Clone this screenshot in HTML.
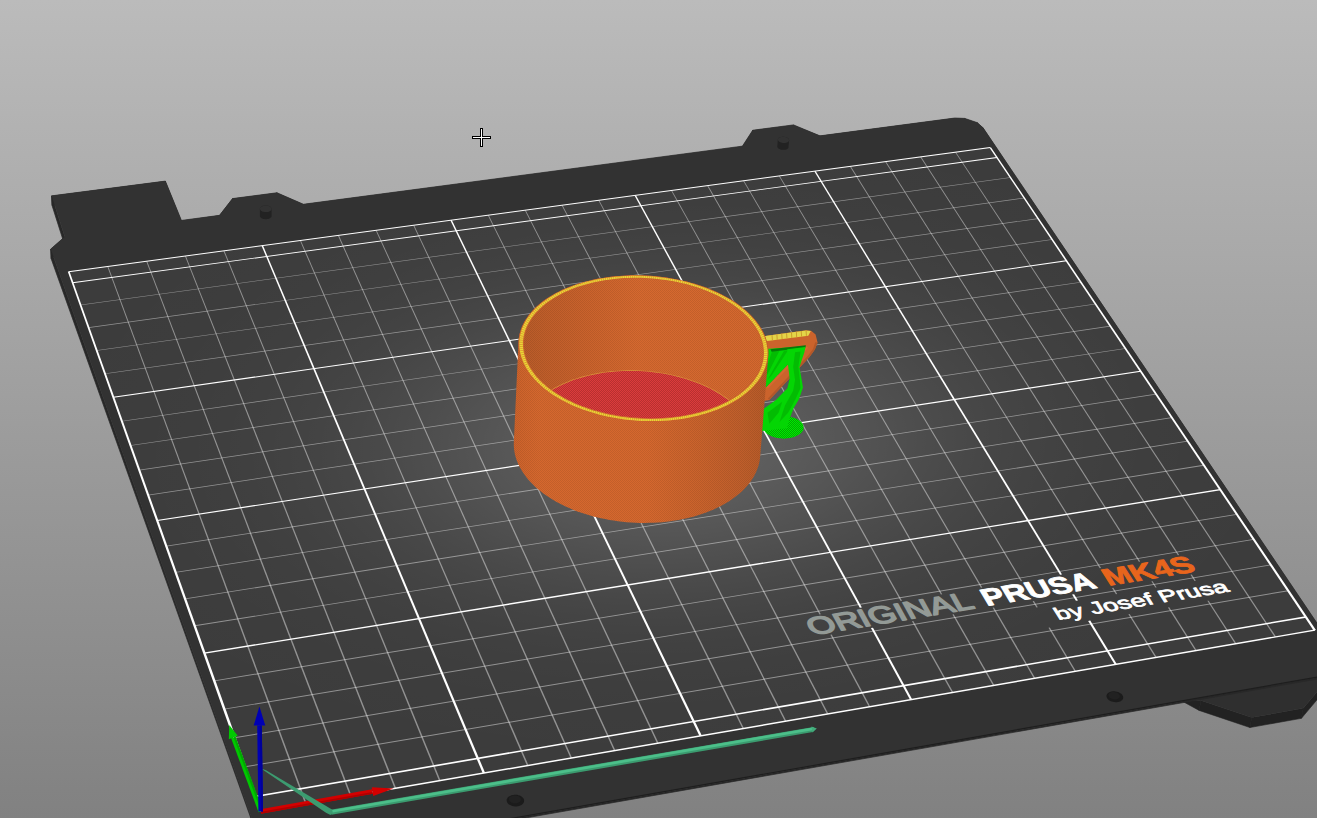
<!DOCTYPE html>
<html lang="en"><head><meta charset="utf-8"><title>PrusaSlicer preview</title>
<style>html,body{margin:0;padding:0;background:#818181;overflow:hidden}svg{display:block}text{font-family:"Liberation Sans",Arial,Helvetica,sans-serif}</style></head>
<body><svg width="1317" height="818" viewBox="0 0 1317 818">
<defs>
<linearGradient id="bg" x1="0" y1="0" x2="0" y2="1"><stop offset="0" stop-color="#bbbbbb"/><stop offset="1" stop-color="#818181"/></linearGradient>
<radialGradient id="hl" cx="0" cy="0" r="1" gradientUnits="userSpaceOnUse" gradientTransform="matrix(687.507 -104.375 -177.704 -343.964 668.23 443.41)"><stop offset="0.0000" stop-color="#fff" stop-opacity="0.1923"/><stop offset="0.0625" stop-color="#fff" stop-opacity="0.1877"/><stop offset="0.1250" stop-color="#fff" stop-opacity="0.1744"/><stop offset="0.1875" stop-color="#fff" stop-opacity="0.1544"/><stop offset="0.2500" stop-color="#fff" stop-opacity="0.1301"/><stop offset="0.3125" stop-color="#fff" stop-opacity="0.1045"/><stop offset="0.3750" stop-color="#fff" stop-opacity="0.0799"/><stop offset="0.4375" stop-color="#fff" stop-opacity="0.0581"/><stop offset="0.5000" stop-color="#fff" stop-opacity="0.0403"/><stop offset="0.5625" stop-color="#fff" stop-opacity="0.0266"/><stop offset="0.6250" stop-color="#fff" stop-opacity="0.0167"/><stop offset="0.6875" stop-color="#fff" stop-opacity="0.0100"/><stop offset="0.7500" stop-color="#fff" stop-opacity="0.0057"/><stop offset="0.8125" stop-color="#fff" stop-opacity="0.0031"/><stop offset="0.8750" stop-color="#fff" stop-opacity="0.0016"/><stop offset="0.9375" stop-color="#fff" stop-opacity="0.0008"/><stop offset="1.0000" stop-color="#fff" stop-opacity="0.0000"/></radialGradient>
</defs>
<rect width="1317" height="818" fill="url(#bg)"/>
<polygon points="1180.59,700.28 1200.89,700.42 1199.19,710.44 1180.59,700.28" fill="#222222" stroke="#222222" stroke-width="0.6"/>
<polygon points="1200.89,700.42 1251.71,717.48 1249.91,727.51 1199.19,710.44" fill="#222222" stroke="#222222" stroke-width="0.6"/>
<polygon points="1251.71,717.48 1303.3,708.33 1301.42,718.34 1249.91,727.51" fill="#222222" stroke="#222222" stroke-width="0.6"/>
<polygon points="1303.3,708.33 1332.49,673.66 1330.58,683.63 1301.42,718.34" fill="#222222" stroke="#222222" stroke-width="0.6"/>
<polygon points="1180.59,700.28 1200.89,700.42 1251.71,717.48 1303.3,708.33 1332.49,673.66" fill="#2f2f2f" />
<polygon points="266.94,861.78 50.78,249 51.15,258.68 266.94,863.34" fill="#282828" stroke="#282828" stroke-width="0.7"/>
<polygon points="50.78,249 64.75,236.76 65.09,246.41 51.15,258.68" fill="#282828" stroke="#282828" stroke-width="0.7"/>
<polygon points="64.75,236.76 51.69,195.84 52.04,205.44 65.09,246.41" fill="#282828" stroke="#282828" stroke-width="0.7"/>
<polygon points="51.69,195.84 165.39,181.1 165.56,190.65 52.04,205.44" fill="#282828" stroke="#282828" stroke-width="0.7"/>
<polygon points="165.39,181.1 181.42,220.41 181.57,230.02 165.56,190.65" fill="#282828" stroke="#282828" stroke-width="0.7"/>
<polygon points="181.42,220.41 219.51,215.37 219.6,224.96 181.57,230.02" fill="#282828" stroke="#282828" stroke-width="0.7"/>
<polygon points="219.51,215.37 232.54,198.59 232.61,208.15 219.6,224.96" fill="#282828" stroke="#282828" stroke-width="0.7"/>
<polygon points="232.54,198.59 276.95,192.75 276.94,202.3 232.61,208.15" fill="#282828" stroke="#282828" stroke-width="0.7"/>
<polygon points="276.95,192.75 303.4,204.26 303.36,213.82 276.94,202.3" fill="#282828" stroke="#282828" stroke-width="0.7"/>
<polygon points="303.4,204.26 742.41,146.14 741.68,155.51 303.36,213.82" fill="#282828" stroke="#282828" stroke-width="0.7"/>
<polygon points="742.41,146.14 752.76,130.23 752.02,139.57 741.68,155.51" fill="#282828" stroke="#282828" stroke-width="0.7"/>
<polygon points="752.76,130.23 793.49,124.88 792.69,134.2 752.02,139.57" fill="#282828" stroke="#282828" stroke-width="0.7"/>
<polygon points="793.49,124.88 819.95,135.87 819.11,145.21 792.69,134.2" fill="#282828" stroke="#282828" stroke-width="0.7"/>
<polygon points="819.95,135.87 954.75,118.02 953.71,127.3 819.11,145.21" fill="#282828" stroke="#282828" stroke-width="0.7"/>
<polygon points="954.75,118.02 964.74,118.4 963.68,127.67 953.71,127.3" fill="#282828" stroke="#282828" stroke-width="0.7"/>
<polygon points="964.74,118.4 977.35,122.67 976.27,131.95 963.68,127.67" fill="#282828" stroke="#282828" stroke-width="0.7"/>
<polygon points="977.35,122.67 983.1,127.87 982.02,137.16 976.27,131.95" fill="#282828" stroke="#282828" stroke-width="0.7"/>
<polygon points="983.1,127.87 1349.88,671.91 1349.59,673.41 982.02,137.16" fill="#282828" stroke="#282828" stroke-width="0.7"/>
<polygon points="1349.88,671.91 266.94,861.78 266.94,863.34 1349.59,673.41" fill="#282828" stroke="#282828" stroke-width="0.7"/>
<polygon points="266.94,861.78 50.78,249 64.75,236.76 51.69,195.84 165.39,181.1 181.42,220.41 219.51,215.37 232.54,198.59 276.95,192.75 303.4,204.26 742.41,146.14 752.76,130.23 793.49,124.88 819.95,135.87 954.75,118.02 964.74,118.4 977.35,122.67 983.1,127.87 1349.88,671.91" fill="#323232" />
<line x1="266.77" y1="861.32" x2="1349.61" y2="671.5" stroke="#1e1e1e" stroke-width="1.2"/>
<polygon points="260.71,811.43 1314.75,630.19 990.32,147.54 68.67,271.74" fill="#3c3c3c" />
<clipPath id="areaclip"><polygon points="260.71,811.43 1314.75,630.19 990.32,147.54 68.67,271.74"/></clipPath>
<rect width="1317" height="818" fill="url(#hl)" clip-path="url(#areaclip)"/>
<g font-family="'Liberation Sans', Arial, Helvetica, sans-serif">
<text transform="matrix(0.40558 -0.06724 0.14741 0.26582 889.53 613.49)" x="-201.5" y="30.45" font-size="87" font-weight="400" fill="#939a96" stroke="#939a96" stroke-width="5.5" stroke-linejoin="round" textLength="403" lengthAdjust="spacingAndGlyphs">ORIGINAL</text>
<text transform="matrix(0.39736 -0.06588 0.15700 0.26128 1037.86 588.89)" x="-140" y="30.45" font-size="87" font-weight="700" fill="#ffffff" stroke="#ffffff" stroke-width="3" stroke-linejoin="round" textLength="280" lengthAdjust="spacingAndGlyphs">PRUSA</text>
<text transform="matrix(0.39132 -0.06488 0.16398 0.25793 1148.08 570.62)" x="-113.5" y="30.45" font-size="87" font-weight="700" fill="#e8651c" stroke="#e8651c" stroke-width="3" stroke-linejoin="round" textLength="227" lengthAdjust="spacingAndGlyphs">MK4S</text>
<text transform="matrix(0.39502 -0.06627 0.16492 0.26244 1141.01 600.01)" x="-217.5" y="21.35" font-size="61" font-weight="400" fill="#ffffff" stroke="#ffffff" stroke-width="2.6" stroke-linejoin="round" textLength="435" lengthAdjust="spacingAndGlyphs">by Josef Prusa</text>
</g>
<g id="grid">
<polygon points="305.1,803.79 107.29,266.53 108.27,266.4 306.67,803.52" fill="#fff" fill-opacity="0.44"/>
<polygon points="350,796.07 146.21,261.29 147.19,261.16 351.56,795.8" fill="#fff" fill-opacity="0.44"/>
<polygon points="394.64,788.4 184.93,256.07 185.9,255.94 396.19,788.13" fill="#fff" fill-opacity="0.44"/>
<polygon points="439.02,780.77 223.45,250.88 224.42,250.75 440.55,780.5" fill="#fff" fill-opacity="0.44"/>
<polygon points="526.99,765.64 299.92,240.58 300.88,240.45 528.51,765.38" fill="#fff" fill-opacity="0.44"/>
<polygon points="570.59,758.14 337.87,235.46 338.83,235.33 572.1,757.88" fill="#fff" fill-opacity="0.44"/>
<polygon points="613.94,750.69 375.63,230.37 376.58,230.24 615.44,750.43" fill="#fff" fill-opacity="0.44"/>
<polygon points="657.03,743.28 413.2,225.31 414.15,225.18 658.53,743.02" fill="#fff" fill-opacity="0.44"/>
<polygon points="742.48,728.59 487.79,215.26 488.73,215.13 743.96,728.33" fill="#fff" fill-opacity="0.44"/>
<polygon points="784.83,721.3 524.8,210.27 525.74,210.14 786.3,721.05" fill="#fff" fill-opacity="0.44"/>
<polygon points="826.95,714.06 561.63,205.31 562.57,205.18 828.4,713.81" fill="#fff" fill-opacity="0.44"/>
<polygon points="868.82,706.86 830.35,634.83 831.72,634.6 870.27,706.61" fill="#fff" fill-opacity="0.44"/>
<polygon points="819.47,614.47 598.29,200.37 599.21,200.24 820.82,614.25" fill="#fff" fill-opacity="0.44"/>
<polygon points="951.84,692.59 911.94,621.24 913.3,621.01 953.28,692.34" fill="#fff" fill-opacity="0.44"/>
<polygon points="900.66,601.07 671.05,190.56 671.97,190.44 901.99,600.85" fill="#fff" fill-opacity="0.44"/>
<polygon points="993,685.51 952.4,614.5 953.75,614.28 994.43,685.26" fill="#fff" fill-opacity="0.44"/>
<polygon points="940.92,594.43 707.17,185.7 708.09,185.57 942.24,594.21" fill="#fff" fill-opacity="0.44"/>
<polygon points="1033.93,678.47 992.63,607.8 993.97,607.58 1035.35,678.23" fill="#fff" fill-opacity="0.44"/>
<polygon points="980.96,587.82 743.11,180.85 744.02,180.73 982.27,587.6" fill="#fff" fill-opacity="0.44"/>
<polygon points="1074.63,671.48 1048.47,627.65 1049.84,627.42 1076.04,671.23" fill="#fff" fill-opacity="0.44"/>
<polygon points="1020.77,581.25 778.87,176.03 779.79,175.91 1022.08,581.03" fill="#fff" fill-opacity="0.44"/>
<polygon points="1036.42,607.46 1032.64,601.14 1033.98,600.91 1037.76,607.24" fill="#fff" fill-opacity="0.44"/>
<polygon points="1155.33,657.6 1128.34,614.19 1129.69,613.96 1156.74,657.36" fill="#fff" fill-opacity="0.44"/>
<polygon points="1099.75,568.21 849.88,166.46 850.79,166.34 1101.05,567.99" fill="#fff" fill-opacity="0.44"/>
<polygon points="1115.9,594.19 1112,587.92 1113.33,587.7 1117.23,593.96" fill="#fff" fill-opacity="0.44"/>
<polygon points="1195.35,650.72 1167.94,607.51 1169.29,607.28 1196.74,650.48" fill="#fff" fill-opacity="0.44"/>
<polygon points="1138.91,561.74 885.13,161.71 886.04,161.59 1140.21,561.53" fill="#fff" fill-opacity="0.44"/>
<polygon points="1155.31,587.6 1151.36,581.36 1152.67,581.14 1156.64,587.38" fill="#fff" fill-opacity="0.44"/>
<polygon points="1235.14,643.88 1207.33,600.87 1208.67,600.64 1236.53,643.64" fill="#fff" fill-opacity="0.44"/>
<polygon points="1177.87,555.32 920.21,156.99 921.12,156.86 1179.16,555.1" fill="#fff" fill-opacity="0.44"/>
<polygon points="1194.51,581.05 1190.49,574.84 1191.81,574.62 1195.83,580.83" fill="#fff" fill-opacity="0.44"/>
<polygon points="1274.71,637.07 955.13,152.28 956.02,152.16 1276.09,636.83" fill="#fff" fill-opacity="0.44"/>
<polygon points="244.68,766.37 1287.92,590.26 1288.51,591.15 245.04,767.37" fill="#fff" fill-opacity="0.44"/>
<polygon points="234.33,737.27 1270.56,564.44 1271.14,565.31 234.67,738.24" fill="#fff" fill-opacity="0.44"/>
<polygon points="224.13,708.63 1253.46,539 1254.02,539.84 224.47,709.56" fill="#fff" fill-opacity="0.44"/>
<polygon points="214.1,680.43 1236.6,513.93 1237.15,514.74 214.42,681.34" fill="#fff" fill-opacity="0.44"/>
<polygon points="194.5,625.34 1203.62,464.87 1204.14,465.63 194.8,626.19" fill="#fff" fill-opacity="0.44"/>
<polygon points="184.92,598.42 1187.49,440.86 1187.99,441.6 185.21,599.25" fill="#fff" fill-opacity="0.44"/>
<polygon points="175.49,571.92 1171.58,417.19 1172.06,417.91 175.77,572.72" fill="#fff" fill-opacity="0.44"/>
<polygon points="166.19,545.8 1155.89,393.85 1156.36,394.56 166.47,546.58" fill="#fff" fill-opacity="0.44"/>
<polygon points="148.02,494.74 1125.17,348.15 1125.62,348.82 148.28,495.47" fill="#fff" fill-opacity="0.44"/>
<polygon points="139.14,469.77 1110.13,325.77 1110.56,326.42 139.39,470.48" fill="#fff" fill-opacity="0.44"/>
<polygon points="130.38,445.17 1095.29,303.7 1095.71,304.33 130.63,445.85" fill="#fff" fill-opacity="0.44"/>
<polygon points="121.75,420.92 1080.65,281.92 1081.06,282.53 121.99,421.58" fill="#fff" fill-opacity="0.44"/>
<polygon points="104.86,373.45 1051.96,239.25 1052.35,239.83 105.09,374.08" fill="#fff" fill-opacity="0.44"/>
<polygon points="96.6,350.23 1037.91,218.33 1038.29,218.9 96.82,350.84" fill="#fff" fill-opacity="0.44"/>
<polygon points="88.45,327.33 1024.04,197.7 1024.4,198.25 88.66,327.92" fill="#fff" fill-opacity="0.44"/>
<polygon points="80.41,304.75 1010.35,177.33 1010.7,177.87 80.62,305.33" fill="#fff" fill-opacity="0.44"/>
<polygon points="482.72,773.25 261.52,245.75 263.01,245.55 485.08,772.85" fill="#fff" />
<polygon points="699.48,735.98 450.33,220.31 451.79,220.11 701.77,735.59" fill="#fff" />
<polygon points="910.06,699.77 870.89,628.08 872.99,627.73 912.28,699.39" fill="#fff" />
<polygon points="859.82,607.81 634.51,195.49 635.93,195.29 861.88,607.47" fill="#fff" />
<polygon points="1114.71,664.58 1088.15,620.96 1090.24,620.61 1116.88,664.21" fill="#fff" />
<polygon points="1060.01,574.77 814.22,171.27 815.62,171.08 1062.03,574.44" fill="#fff" />
<polygon points="1075.91,600.87 1072.07,594.57 1074.12,594.23 1077.97,600.52" fill="#fff" />
<polygon points="255.1,795.66 1305.36,616.22 1306.32,617.64 255.67,797.25" fill="#fff" />
<polygon points="204.14,652.44 1219.85,489.01 1220.67,490.23 204.62,653.79" fill="#fff" />
<polygon points="156.97,519.88 1140.3,370.66 1141.01,371.71 157.38,521.04" fill="#fff" />
<polygon points="113.18,396.84 1066.1,260.28 1066.72,261.2 113.54,397.84" fill="#fff" />
<polygon points="72.44,282.33 996.74,157.09 997.28,157.9 72.74,283.19" fill="#fff" />
<polygon points="260.46,810.71 1314.32,629.55 1315.18,630.83 260.97,812.14" fill="#fff" />
<polygon points="68.5,271.26 990.02,147.1 990.61,147.98 68.84,272.21" fill="#fff" />
<polygon points="259.36,811.66 67.82,271.85 69.52,271.62 262.07,811.19" fill="#fff" />
<polygon points="1313.58,630.39 989.55,147.64 991.09,147.43 1315.93,629.98" fill="#fff" />
</g>
<polygon points="259.94,209.12 259.94,208.61 260.09,208.1 260.38,207.62 260.79,207.16 261.33,206.75 261.99,206.4 262.73,206.1 263.55,205.87 264.42,205.71 265.32,205.63 266.24,205.63 267.14,205.71 268.01,205.87 268.83,206.1 269.57,206.4 270.21,206.76 270.75,207.18 271.16,207.63 271.45,208.12 271.59,208.62 271.59,215.66 271.59,216.18 271.44,216.68 271.16,217.17 270.74,217.62 270.2,218.03 269.55,218.4 268.81,218.69 267.99,218.93 267.12,219.08 266.21,219.16 265.3,219.16 264.39,219.08 263.52,218.92 262.71,218.69 261.97,218.39 261.32,218.03 260.79,217.61 260.37,217.16 260.09,216.67 259.95,216.16" fill="#222222" />
<polygon points="271.45,208.12 271.16,207.63 270.75,207.18 270.21,206.76 269.57,206.4 268.83,206.1 268.01,205.87 267.14,205.71 266.24,205.63 265.32,205.63 264.42,205.71 263.55,205.87 262.73,206.1 261.99,206.39 261.33,206.75 260.79,207.17 260.37,207.62 260.09,208.1 259.94,208.61 259.94,209.12 260.08,209.62 260.36,210.11 260.77,210.56 261.31,210.98 261.95,211.34 262.69,211.64 263.51,211.87 264.38,212.03 265.29,212.11 266.21,212.11 267.11,212.03 267.99,211.88 268.8,211.65 269.55,211.35 270.2,210.99 270.74,210.57 271.16,210.12 271.44,209.63 271.59,209.13 271.59,208.62" fill="#323232" />
<polygon points="777.29,146.54 777.87,139.65 777.92,139.18 778.12,138.72 778.44,138.29 778.89,137.91 779.45,137.57 780.11,137.29 780.85,137.07 781.66,136.93 782.51,136.85 783.38,136.86 784.26,136.93 785.12,137.08 785.93,137.3 786.69,137.59 787.37,137.93 787.95,138.32 788.42,138.75 788.77,139.21 788.99,139.68 789.07,140.16 788.48,147.05 788.43,147.52 788.24,147.98 787.91,148.41 787.47,148.8 786.9,149.14 786.25,149.42 785.5,149.64 784.7,149.79 783.84,149.86 782.97,149.86 782.09,149.78 781.23,149.63 780.42,149.41 779.66,149.12 778.98,148.78 778.4,148.39 777.93,147.96 777.59,147.5 777.37,147.02" fill="#222222" />
<polygon points="788.77,139.21 788.42,138.75 787.95,138.32 787.37,137.93 786.69,137.59 785.94,137.3 785.12,137.08 784.26,136.93 783.39,136.86 782.51,136.85 781.66,136.93 780.85,137.07 780.11,137.29 779.45,137.57 778.89,137.91 778.44,138.29 778.12,138.72 777.92,139.18 777.86,139.65 777.95,140.14 778.16,140.61 778.51,141.07 778.98,141.5 779.56,141.89 780.24,142.23 780.99,142.52 781.81,142.74 782.67,142.89 783.55,142.97 784.43,142.97 785.28,142.9 786.09,142.75 786.83,142.53 787.49,142.25 788.05,141.91 788.5,141.53 788.82,141.1 789.01,140.64 789.07,140.16 788.99,139.68" fill="#323232" />
<polygon points="523.8,799.1 523.32,798.23 522.64,797.42 521.79,796.69 520.78,796.06 519.64,795.53 518.39,795.13 517.07,794.87 515.71,794.74 514.34,794.76 513,794.91 511.72,795.21 510.53,795.64 509.45,796.19 508.53,796.85 507.77,797.6 507.2,798.42 506.83,799.3 506.67,800.2 506.73,801.12 507,802.02 507.48,802.89 508.15,803.7 509.01,804.43 510.02,805.07 511.16,805.6 512.41,806 513.73,806.27 515.1,806.39 516.47,806.38 517.81,806.22 519.1,805.92 520.29,805.49 521.37,804.93 522.29,804.27 523.05,803.52 523.62,802.7 523.98,801.82 524.13,800.91 524.07,800" fill="#1b1b1b" />
<polygon points="520.64,798.37 520.31,797.78 519.85,797.22 519.27,796.73 518.57,796.29 517.79,795.93 516.94,795.66 516.04,795.48 515.11,795.39 514.17,795.4 513.25,795.51 512.38,795.71 511.56,796 510.83,796.38 510.19,796.83 509.68,797.34 509.29,797.91 509.03,798.5 508.93,799.13 508.97,799.75 509.15,800.37 509.48,800.96 509.94,801.52 510.52,802.02 511.21,802.45 512,802.81 512.85,803.09 513.75,803.27 514.69,803.36 515.62,803.35 516.54,803.24 517.42,803.03 518.24,802.74 518.97,802.36 519.61,801.91 520.13,801.39 520.51,800.83 520.76,800.23 520.87,799.61 520.83,798.99" fill="#212121" />
<polygon points="1122.58,695.43 1121.99,694.62 1121.22,693.87 1120.29,693.19 1119.23,692.59 1118.06,692.1 1116.82,691.73 1115.52,691.48 1114.21,691.35 1112.92,691.37 1111.67,691.51 1110.5,691.79 1109.43,692.18 1108.5,692.7 1107.73,693.31 1107.13,694 1106.72,694.77 1106.51,695.59 1106.5,696.43 1106.7,697.29 1107.11,698.13 1107.7,698.94 1108.47,699.69 1109.39,700.38 1110.46,700.97 1111.63,701.47 1112.88,701.85 1114.17,702.1 1115.49,702.22 1116.79,702.21 1118.04,702.06 1119.21,701.78 1120.28,701.38 1121.21,700.87 1121.98,700.26 1122.58,699.56 1122.99,698.79 1123.19,697.97 1123.19,697.13 1122.99,696.27" fill="#1b1b1b" />
<polygon points="1119.47,694.75 1119.06,694.19 1118.54,693.68 1117.9,693.21 1117.18,692.81 1116.38,692.47 1115.53,692.21 1114.64,692.04 1113.74,691.96 1112.86,691.97 1112,692.07 1111.2,692.25 1110.47,692.53 1109.84,692.88 1109.31,693.29 1108.9,693.77 1108.62,694.29 1108.47,694.85 1108.47,695.43 1108.61,696.01 1108.88,696.59 1109.29,697.14 1109.81,697.66 1110.45,698.13 1111.17,698.54 1111.97,698.87 1112.83,699.13 1113.72,699.3 1114.62,699.39 1115.5,699.38 1116.36,699.28 1117.16,699.09 1117.89,698.82 1118.53,698.47 1119.06,698.05 1119.47,697.57 1119.74,697.04 1119.89,696.48 1119.89,695.91 1119.75,695.32" fill="#212121" />
<defs><linearGradient id="cupg" x1="514" y1="0" x2="769" y2="0" gradientUnits="userSpaceOnUse">
<stop offset="0" stop-color="#cd632b"/><stop offset="0.1" stop-color="#d6682e"/><stop offset="0.52" stop-color="#d6682e"/><stop offset="0.73" stop-color="#ca632c"/><stop offset="0.89" stop-color="#c05f2b"/><stop offset="1" stop-color="#b75a28"/></linearGradient>
<linearGradient id="cupin" x1="520" y1="0" x2="765" y2="0" gradientUnits="userSpaceOnUse">
<stop offset="0" stop-color="#b85b29"/><stop offset="0.1" stop-color="#c05e2a"/><stop offset="0.28" stop-color="#cb632c"/><stop offset="0.48" stop-color="#d6692f"/><stop offset="1" stop-color="#d5682e"/></linearGradient>
<pattern id="dith" width="2" height="2" patternUnits="userSpaceOnUse"><rect width="1" height="1" fill="#000" fill-opacity="0.09"/><rect x="1" y="1" width="1" height="1" fill="#000" fill-opacity="0.09"/></pattern><pattern id="chk" width="2" height="2" patternUnits="userSpaceOnUse"><rect width="2" height="2" fill="#b83030"/><rect width="1" height="1" fill="#dc3c3c"/><rect x="1" y="1" width="1" height="1" fill="#dc3c3c"/></pattern></defs>
<defs><pattern id="gchk" width="2" height="2" patternUnits="userSpaceOnUse"><rect width="2" height="2" fill="#00a800"/><rect width="1" height="1" fill="#00ea00"/><rect x="1" y="1" width="1" height="1" fill="#00ea00"/></pattern></defs>
<ellipse cx="783.67" cy="427.43" rx="20" ry="11.2" fill="url(#gchk)"/>
<polygon points="762.02,347.61 806.42,345.23 765.69,387.98 762.02,388.9" fill="#04d604" />
<polygon points="772.11,351.28 779.45,350.73 767.52,374.22 764.77,373.3" fill="#03bc03" />
<polygon points="784.04,350.73 788.07,350.37 771.19,376.06 767.52,379.72" fill="#03bc03" />
<polygon points="762.02,338.99 766.73,335.63 805.83,330.26 811.19,330.73 815.6,334.59 817.56,342.48 814.86,349.45 809.72,356.79 769.36,399.91 762.02,401.19 762.02,387.25 766.7,386.97 805.87,346.33 768.62,348.83 762.02,349.27" fill="#cb632c" />
<polygon points="805.87,346.33 766.7,386.97 767.89,388.53 808.26,347.8" fill="#d46a30" />
<polygon points="817.56,342.48 814.86,349.45 809.72,356.79 769.36,399.91 767.89,398.44 808.26,355.14 813.03,348.9 815.23,342.29" fill="#b35829" />
<polygon points="762.39,336.79 766.73,335.87 805.83,330.46 810.83,330.92 808.26,335.87 767.23,341.01 762.39,341.56" fill="#e4d548" />
<polygon points="771.56,335.14 772.48,335.03 772.84,340.46 771.93,340.57" fill="#c99a2a" />
<polygon points="776.42,334.47 777.34,334.36 777.71,339.79 776.79,339.9" fill="#c99a2a" />
<polygon points="781.28,333.8 782.2,333.69 782.57,339.12 781.65,339.23" fill="#c99a2a" />
<polygon points="786.15,333.13 787.06,333.02 787.43,338.45 786.51,338.56" fill="#c99a2a" />
<polygon points="791.01,332.46 791.93,332.35 792.29,337.78 791.38,337.89" fill="#c99a2a" />
<polygon points="795.87,331.79 796.79,331.68 797.16,337.11 796.24,337.22" fill="#c99a2a" />
<polygon points="800.73,331.12 801.65,331.01 802.02,336.44 801.1,336.55" fill="#c99a2a" />
<polygon points="805.6,330.45 806.51,330.34 806.88,335.77 805.96,335.88" fill="#c99a2a" />
<polygon points="770.46,349.27 805.87,345.32 805.5,347.43 771.56,351.65" fill="#067a08" />
<polygon points="787.34,349.27 805.5,346.88 804.4,352.2 799.45,366.88 801.47,378.62 802.94,387.43 799.08,398.99 793.58,408.17 789.17,420.09 786.79,428.35 762.02,431.1 762.02,410 775.96,399.91 787.34,388.35 789.72,378.62 788.26,366.88 787.34,359.17" fill="#04d604" />
<polygon points="795.05,352.2 800.55,351.47 798.35,366.88 799.82,379.72 800.55,387.98 795.05,399.91 788.07,412.75 779.45,421.93 784.95,405.41 793.21,390.73 795.05,379.72 793.21,366.88" fill="#03bc03" />
<polygon points="767.52,412.75 782.2,401.74 778.53,412.75 769.36,423.76" fill="#03bc03" />
<polygon points="513.8,444.04 513.88,441.45 518.53,341.26 518.76,338.73 519.14,336.21 519.67,333.7 520.35,331.21 521.18,328.75 522.15,326.31 523.27,323.91 524.54,321.53 525.94,319.19 527.49,316.88 529.18,314.62 531,312.39 532.95,310.21 535.03,308.08 537.25,306 539.58,303.97 542.04,302 544.62,300.08 547.31,298.22 550.12,296.42 553.03,294.68 556.05,293.01 559.17,291.41 562.38,289.87 565.7,288.4 569.1,287 572.58,285.68 576.15,284.43 579.8,283.26 583.51,282.17 587.3,281.15 591.15,280.21 595.06,279.35 599.03,278.57 603.04,277.88 607.1,277.26 611.21,276.73 615.35,276.29 619.52,275.92 623.71,275.65 627.93,275.45 632.17,275.35 636.42,275.32 640.68,275.39 644.94,275.53 649.2,275.77 653.45,276.08 657.69,276.48 661.92,276.97 666.12,277.54 670.3,278.19 674.45,278.92 678.56,279.73 682.63,280.63 686.65,281.6 690.63,282.65 694.55,283.78 698.42,284.98 702.22,286.26 705.95,287.61 709.61,289.03 713.2,290.53 716.71,292.09 720.13,293.72 723.46,295.41 726.7,297.17 729.85,298.99 732.89,300.86 735.83,302.8 738.66,304.79 741.38,306.83 743.99,308.92 746.48,311.06 748.85,313.25 751.1,315.48 753.22,317.75 755.21,320.05 757.07,322.4 758.79,324.77 760.38,327.18 761.83,329.61 763.14,332.07 764.31,334.55 765.33,337.05 766.2,339.56 766.93,342.09 767.51,344.63 767.94,347.17 768.22,349.72 768.35,352.26 768.32,354.81 768.14,357.35 760.12,457.3 759.79,459.87 759.31,462.44 758.67,464.99 757.89,467.52 756.97,470.03 755.89,472.51 754.66,474.97 753.29,477.4 751.78,479.79 750.12,482.15 748.32,484.46 746.38,486.74 744.3,488.97 742.09,491.14 739.75,493.27 737.27,495.34 734.67,497.36 731.95,499.31 729.1,501.21 726.14,503.04 723.06,504.8 719.88,506.49 716.58,508.11 713.19,509.65 709.7,511.12 706.11,512.51 702.44,513.82 698.68,515.05 694.84,516.19 690.93,517.25 686.94,518.22 682.89,519.1 678.79,519.9 674.62,520.6 670.41,521.21 666.16,521.73 661.87,522.16 657.54,522.49 653.19,522.73 648.82,522.87 644.43,522.92 640.03,522.88 635.63,522.74 631.23,522.5 626.83,522.17 622.45,521.75 618.09,521.23 613.76,520.62 609.45,519.92 605.18,519.12 600.95,518.24 596.77,517.27 592.64,516.21 588.56,515.07 584.55,513.84 580.61,512.52 576.74,511.13 572.95,509.66 569.25,508.11 565.62,506.49 562.1,504.79 558.66,503.02 555.33,501.19 552.11,499.29 548.99,497.32 545.98,495.3 543.09,493.22 540.33,491.08 537.68,488.89 535.16,486.65 532.77,484.37 530.51,482.04 528.39,479.67 526.4,477.27 524.56,474.83 522.85,472.36 521.29,469.86 519.87,467.33 518.6,464.79 517.47,462.22 516.5,459.64 515.67,457.06 515,454.46 514.47,451.85 514.1,449.25 513.87,446.64" fill="url(#cupg)" />
<polygon points="513.8,444.04 513.88,441.45 518.53,341.26 518.76,338.73 519.14,336.21 519.67,333.7 520.35,331.21 521.18,328.75 522.15,326.31 523.27,323.91 524.54,321.53 525.94,319.19 527.49,316.88 529.18,314.62 531,312.39 532.95,310.21 535.03,308.08 537.25,306 539.58,303.97 542.04,302 544.62,300.08 547.31,298.22 550.12,296.42 553.03,294.68 556.05,293.01 559.17,291.41 562.38,289.87 565.7,288.4 569.1,287 572.58,285.68 576.15,284.43 579.8,283.26 583.51,282.17 587.3,281.15 591.15,280.21 595.06,279.35 599.03,278.57 603.04,277.88 607.1,277.26 611.21,276.73 615.35,276.29 619.52,275.92 623.71,275.65 627.93,275.45 632.17,275.35 636.42,275.32 640.68,275.39 644.94,275.53 649.2,275.77 653.45,276.08 657.69,276.48 661.92,276.97 666.12,277.54 670.3,278.19 674.45,278.92 678.56,279.73 682.63,280.63 686.65,281.6 690.63,282.65 694.55,283.78 698.42,284.98 702.22,286.26 705.95,287.61 709.61,289.03 713.2,290.53 716.71,292.09 720.13,293.72 723.46,295.41 726.7,297.17 729.85,298.99 732.89,300.86 735.83,302.8 738.66,304.79 741.38,306.83 743.99,308.92 746.48,311.06 748.85,313.25 751.1,315.48 753.22,317.75 755.21,320.05 757.07,322.4 758.79,324.77 760.38,327.18 761.83,329.61 763.14,332.07 764.31,334.55 765.33,337.05 766.2,339.56 766.93,342.09 767.51,344.63 767.94,347.17 768.22,349.72 768.35,352.26 768.32,354.81 768.14,357.35 760.12,457.3 759.79,459.87 759.31,462.44 758.67,464.99 757.89,467.52 756.97,470.03 755.89,472.51 754.66,474.97 753.29,477.4 751.78,479.79 750.12,482.15 748.32,484.46 746.38,486.74 744.3,488.97 742.09,491.14 739.75,493.27 737.27,495.34 734.67,497.36 731.95,499.31 729.1,501.21 726.14,503.04 723.06,504.8 719.88,506.49 716.58,508.11 713.19,509.65 709.7,511.12 706.11,512.51 702.44,513.82 698.68,515.05 694.84,516.19 690.93,517.25 686.94,518.22 682.89,519.1 678.79,519.9 674.62,520.6 670.41,521.21 666.16,521.73 661.87,522.16 657.54,522.49 653.19,522.73 648.82,522.87 644.43,522.92 640.03,522.88 635.63,522.74 631.23,522.5 626.83,522.17 622.45,521.75 618.09,521.23 613.76,520.62 609.45,519.92 605.18,519.12 600.95,518.24 596.77,517.27 592.64,516.21 588.56,515.07 584.55,513.84 580.61,512.52 576.74,511.13 572.95,509.66 569.25,508.11 565.62,506.49 562.1,504.79 558.66,503.02 555.33,501.19 552.11,499.29 548.99,497.32 545.98,495.3 543.09,493.22 540.33,491.08 537.68,488.89 535.16,486.65 532.77,484.37 530.51,482.04 528.39,479.67 526.4,477.27 524.56,474.83 522.85,472.36 521.29,469.86 519.87,467.33 518.6,464.79 517.47,462.22 516.5,459.64 515.67,457.06 515,454.46 514.47,451.85 514.1,449.25 513.87,446.64" fill="url(#dith)" />
<polygon points="761.83,329.61 760.38,327.18 758.8,324.77 757.07,322.4 755.21,320.05 753.22,317.75 751.1,315.48 748.85,313.25 746.48,311.06 743.99,308.92 741.38,306.83 738.66,304.79 735.83,302.8 732.89,300.86 729.84,298.99 726.7,297.17 723.46,295.41 720.13,293.72 716.71,292.09 713.2,290.53 709.61,289.03 705.95,287.61 702.22,286.26 698.42,284.98 694.55,283.78 690.63,282.65 686.65,281.6 682.63,280.63 678.56,279.73 674.45,278.92 670.3,278.19 666.12,277.54 661.92,276.97 657.69,276.48 653.45,276.08 649.2,275.77 644.94,275.53 640.68,275.39 636.42,275.32 632.17,275.35 627.93,275.45 623.71,275.65 619.52,275.92 615.35,276.29 611.21,276.73 607.1,277.26 603.04,277.88 599.03,278.57 595.06,279.35 591.15,280.21 587.3,281.15 583.51,282.16 579.8,283.26 576.15,284.43 572.58,285.68 569.1,287.01 565.7,288.4 562.39,289.87 559.17,291.41 556.05,293.01 553.03,294.68 550.12,296.42 547.31,298.22 544.62,300.08 542.04,302 539.58,303.97 537.25,306 535.03,308.08 532.95,310.22 531,312.39 529.18,314.62 527.49,316.88 525.94,319.19 524.54,321.53 523.27,323.91 522.15,326.32 521.18,328.75 520.35,331.21 519.67,333.7 519.14,336.21 518.76,338.73 518.53,341.26 518.46,343.81 518.54,346.37 518.77,348.93 519.15,351.49 519.69,354.05 520.38,356.6 521.22,359.15 522.21,361.68 523.35,364.2 524.65,366.71 526.09,369.19 527.68,371.65 529.41,374.08 531.29,376.48 533.3,378.85 535.46,381.18 537.75,383.48 540.18,385.73 542.74,387.93 545.42,390.09 548.23,392.19 551.16,394.25 554.21,396.24 557.38,398.18 560.65,400.05 564.03,401.86 567.51,403.61 571.09,405.28 574.77,406.89 578.53,408.42 582.38,409.87 586.3,411.25 590.3,412.55 594.37,413.76 598.5,414.9 602.69,415.94 606.93,416.91 611.22,417.78 615.55,418.57 619.92,419.27 624.32,419.88 628.74,420.4 633.18,420.82 637.63,421.16 642.1,421.4 646.56,421.55 651.02,421.6 655.47,421.56 659.9,421.43 664.31,421.2 668.7,420.89 673.05,420.48 677.36,419.97 681.63,419.38 685.85,418.7 690.01,417.93 694.11,417.07 698.15,416.12 702.11,415.09 706,413.97 709.81,412.77 713.53,411.49 717.17,410.13 720.7,408.7 724.14,407.19 727.47,405.6 730.7,403.95 733.81,402.22 736.81,400.43 739.69,398.58 742.45,396.66 745.08,394.69 747.58,392.65 749.95,390.57 752.19,388.43 754.29,386.25 756.25,384.02 758.07,381.75 759.75,379.43 761.28,377.09 762.66,374.7 763.89,372.29 764.98,369.85 765.92,367.39 766.7,364.9 767.33,362.4 767.82,359.88 768.14,357.35 768.32,354.81 768.35,352.27 768.22,349.72 767.94,347.17 767.51,344.63 766.93,342.09 766.2,339.56 765.33,337.05 764.31,334.55 763.14,332.07" fill="#c9622b" />
<polygon points="761.04,329.73 759.6,327.31 758.03,324.92 756.31,322.56 754.47,320.23 752.49,317.94 750.39,315.68 748.15,313.47 745.8,311.3 743.33,309.17 740.74,307.09 738.03,305.06 735.22,303.09 732.3,301.17 729.27,299.3 726.15,297.5 722.93,295.75 719.62,294.07 716.22,292.45 712.74,290.9 709.18,289.41 705.54,288 701.83,286.66 698.06,285.39 694.22,284.19 690.32,283.07 686.37,282.03 682.37,281.06 678.33,280.17 674.24,279.36 670.12,278.64 665.97,277.99 661.8,277.43 657.6,276.95 653.39,276.55 649.16,276.23 644.93,276 640.7,275.86 636.47,275.79 632.25,275.82 628.04,275.92 623.85,276.11 619.67,276.39 615.53,276.75 611.42,277.19 607.34,277.72 603.31,278.33 599.32,279.02 595.38,279.79 591.5,280.65 587.67,281.58 583.91,282.59 580.22,283.68 576.6,284.85 573.05,286.09 569.59,287.4 566.21,288.79 562.92,290.24 559.73,291.77 556.63,293.37 553.63,295.03 550.74,296.75 547.95,298.54 545.28,300.39 542.72,302.3 540.27,304.26 537.95,306.27 535.76,308.34 533.69,310.46 531.75,312.62 529.94,314.83 528.27,317.08 526.73,319.37 525.33,321.7 524.08,324.06 522.97,326.45 522,328.87 521.18,331.32 520.5,333.79 519.98,336.28 519.6,338.78 519.38,341.3 519.3,343.83 519.38,346.37 519.61,348.91 519.99,351.46 520.53,354 521.21,356.53 522.05,359.06 523.03,361.58 524.17,364.09 525.45,366.57 526.89,369.04 528.46,371.48 530.19,373.9 532.05,376.28 534.05,378.63 536.2,380.95 538.47,383.23 540.88,385.46 543.42,387.65 546.09,389.79 548.88,391.88 551.8,393.92 554.82,395.9 557.97,397.83 561.22,399.69 564.58,401.49 568.04,403.22 571.59,404.88 575.24,406.47 578.98,407.99 582.8,409.44 586.69,410.8 590.67,412.09 594.7,413.3 598.81,414.43 602.97,415.47 607.18,416.43 611.44,417.3 615.74,418.08 620.08,418.77 624.45,419.38 628.84,419.89 633.25,420.31 637.68,420.65 642.11,420.88 646.54,421.03 650.97,421.09 655.39,421.05 659.79,420.92 664.17,420.69 668.53,420.38 672.85,419.97 677.13,419.47 681.37,418.88 685.56,418.2 689.69,417.44 693.77,416.58 697.77,415.64 701.71,414.62 705.57,413.51 709.36,412.32 713.05,411.05 716.66,409.7 720.17,408.27 723.59,406.77 726.9,405.2 730.1,403.56 733.2,401.84 736.18,400.07 739.04,398.22 741.78,396.32 744.39,394.36 746.88,392.34 749.23,390.27 751.45,388.15 753.54,385.98 755.49,383.76 757.29,381.51 758.96,379.21 760.48,376.88 761.85,374.51 763.08,372.12 764.16,369.7 765.09,367.25 765.87,364.78 766.5,362.29 766.98,359.79 767.31,357.28 767.48,354.76 767.51,352.23 767.38,349.7 767.1,347.17 766.68,344.64 766.1,342.12 765.38,339.61 764.51,337.12 763.5,334.63 762.34,332.17" fill="#e8d836" />
<clipPath id="ringclip"><path d="M761.04 329.73 L759.6 327.31 L758.03 324.92 L756.31 322.56 L754.47 320.23 L752.49 317.94 L750.39 315.68 L748.15 313.47 L745.8 311.3 L743.33 309.17 L740.74 307.09 L738.03 305.06 L735.22 303.09 L732.3 301.17 L729.27 299.3 L726.15 297.5 L722.93 295.75 L719.62 294.07 L716.22 292.45 L712.74 290.9 L709.18 289.41 L705.54 288 L701.83 286.66 L698.06 285.39 L694.22 284.19 L690.32 283.07 L686.37 282.03 L682.37 281.06 L678.33 280.17 L674.24 279.36 L670.12 278.64 L665.97 277.99 L661.8 277.43 L657.6 276.95 L653.39 276.55 L649.16 276.23 L644.93 276 L640.7 275.86 L636.47 275.79 L632.25 275.82 L628.04 275.92 L623.85 276.11 L619.67 276.39 L615.53 276.75 L611.42 277.19 L607.34 277.72 L603.31 278.33 L599.32 279.02 L595.38 279.79 L591.5 280.65 L587.67 281.58 L583.91 282.59 L580.22 283.68 L576.6 284.85 L573.05 286.09 L569.59 287.4 L566.21 288.79 L562.92 290.24 L559.73 291.77 L556.63 293.37 L553.63 295.03 L550.74 296.75 L547.95 298.54 L545.28 300.39 L542.72 302.3 L540.27 304.26 L537.95 306.27 L535.76 308.34 L533.69 310.46 L531.75 312.62 L529.94 314.83 L528.27 317.08 L526.73 319.37 L525.33 321.7 L524.08 324.06 L522.97 326.45 L522 328.87 L521.18 331.32 L520.5 333.79 L519.98 336.28 L519.6 338.78 L519.38 341.3 L519.3 343.83 L519.38 346.37 L519.61 348.91 L519.99 351.46 L520.53 354 L521.21 356.53 L522.05 359.06 L523.03 361.58 L524.17 364.09 L525.45 366.57 L526.89 369.04 L528.46 371.48 L530.19 373.9 L532.05 376.28 L534.05 378.63 L536.2 380.95 L538.47 383.23 L540.88 385.46 L543.42 387.65 L546.09 389.79 L548.88 391.88 L551.8 393.92 L554.82 395.9 L557.97 397.83 L561.22 399.69 L564.58 401.49 L568.04 403.22 L571.59 404.88 L575.24 406.47 L578.98 407.99 L582.8 409.44 L586.69 410.8 L590.67 412.09 L594.7 413.3 L598.81 414.43 L602.97 415.47 L607.18 416.43 L611.44 417.3 L615.74 418.08 L620.08 418.77 L624.45 419.38 L628.84 419.89 L633.25 420.31 L637.68 420.65 L642.11 420.88 L646.54 421.03 L650.97 421.09 L655.39 421.05 L659.79 420.92 L664.17 420.69 L668.53 420.38 L672.85 419.97 L677.13 419.47 L681.37 418.88 L685.56 418.2 L689.69 417.44 L693.77 416.58 L697.77 415.64 L701.71 414.62 L705.57 413.51 L709.36 412.32 L713.05 411.05 L716.66 409.7 L720.17 408.27 L723.59 406.77 L726.9 405.2 L730.1 403.56 L733.2 401.84 L736.18 400.07 L739.04 398.22 L741.78 396.32 L744.39 394.36 L746.88 392.34 L749.23 390.27 L751.45 388.15 L753.54 385.98 L755.49 383.76 L757.29 381.51 L758.96 379.21 L760.48 376.88 L761.85 374.51 L763.08 372.12 L764.16 369.7 L765.09 367.25 L765.87 364.78 L766.5 362.29 L766.98 359.79 L767.31 357.28 L767.48 354.76 L767.51 352.23 L767.38 349.7 L767.1 347.17 L766.68 344.64 L766.1 342.12 L765.38 339.61 L764.51 337.12 L763.5 334.63 L762.34 332.17Z M757.69 330.22 L756.29 327.87 L754.76 325.54 L753.1 323.25 L751.31 320.99 L749.39 318.76 L747.35 316.57 L745.18 314.42 L742.9 312.3 L740.49 310.24 L737.98 308.22 L735.35 306.25 L732.62 304.33 L729.78 302.46 L726.85 300.65 L723.81 298.89 L720.69 297.19 L717.47 295.56 L714.17 293.98 L710.79 292.48 L707.33 291.03 L703.79 289.66 L700.19 288.35 L696.52 287.12 L692.79 285.96 L689 284.87 L685.16 283.85 L681.28 282.91 L677.35 282.05 L673.38 281.26 L669.38 280.56 L665.34 279.93 L661.28 279.38 L657.21 278.91 L653.11 278.52 L649.01 278.22 L644.89 277.99 L640.78 277.85 L636.67 277.79 L632.57 277.81 L628.47 277.92 L624.4 278.1 L620.35 278.37 L616.32 278.72 L612.32 279.15 L608.36 279.67 L604.44 280.26 L600.57 280.93 L596.74 281.68 L592.97 282.51 L589.25 283.42 L585.59 284.4 L582.01 285.46 L578.49 286.6 L575.05 287.8 L571.68 289.08 L568.4 290.43 L565.21 291.85 L562.1 293.33 L559.09 294.88 L556.18 296.5 L553.37 298.17 L550.67 299.91 L548.07 301.71 L545.58 303.56 L543.21 305.47 L540.96 307.43 L538.83 309.44 L536.82 311.49 L534.94 313.6 L533.18 315.74 L531.56 317.93 L530.07 320.16 L528.72 322.42 L527.5 324.71 L526.42 327.03 L525.49 329.39 L524.69 331.76 L524.04 334.16 L523.53 336.58 L523.17 339.01 L522.95 341.46 L522.88 343.92 L522.96 346.38 L523.19 348.85 L523.56 351.32 L524.08 353.79 L524.75 356.25 L525.57 358.71 L526.53 361.15 L527.63 363.58 L528.88 366 L530.28 368.39 L531.81 370.76 L533.48 373.11 L535.3 375.42 L537.24 377.7 L539.33 379.95 L541.54 382.16 L543.88 384.33 L546.35 386.46 L548.94 388.54 L551.65 390.56 L554.48 392.54 L557.42 394.47 L560.47 396.33 L563.63 398.14 L566.89 399.88 L570.25 401.56 L573.7 403.18 L577.25 404.72 L580.87 406.19 L584.58 407.6 L588.36 408.92 L592.22 410.17 L596.14 411.34 L600.12 412.44 L604.16 413.45 L608.25 414.38 L612.39 415.22 L616.56 415.98 L620.77 416.65 L625.01 417.24 L629.27 417.74 L633.55 418.15 L637.85 418.47 L642.15 418.7 L646.45 418.84 L650.75 418.9 L655.04 418.86 L659.31 418.73 L663.56 418.52 L667.79 418.21 L671.98 417.82 L676.14 417.33 L680.26 416.76 L684.32 416.1 L688.34 415.36 L692.29 414.53 L696.18 413.62 L700.01 412.63 L703.76 411.55 L707.43 410.4 L711.02 409.16 L714.52 407.86 L717.93 406.47 L721.25 405.02 L724.46 403.49 L727.57 401.9 L730.58 400.23 L733.47 398.51 L736.25 396.72 L738.91 394.88 L741.45 392.97 L743.87 391.01 L746.15 389 L748.31 386.94 L750.34 384.84 L752.23 382.69 L753.99 380.5 L755.61 378.27 L757.09 376.01 L758.43 373.71 L759.62 371.38 L760.67 369.03 L761.58 366.66 L762.34 364.26 L762.95 361.85 L763.42 359.42 L763.74 356.98 L763.92 354.53 L763.94 352.07 L763.82 349.61 L763.56 347.16 L763.15 344.7 L762.59 342.26 L761.89 339.82 L761.05 337.39 L760.07 334.98 L758.95 332.59Z" clip-rule="evenodd"/></clipPath>
<path d="M759.27 329.99 L757.85 327.6 L756.3 325.25 L754.61 322.92 L752.8 320.63 L750.85 318.37 L748.78 316.15 L746.58 313.97 L744.26 311.83 L741.83 309.74 L739.28 307.69 L736.61 305.69 L733.84 303.74 L730.97 301.85 L727.99 300.01 L724.91 298.23 L721.74 296.51 L718.48 294.86 L715.14 293.26 L711.71 291.73 L708.2 290.27 L704.61 288.88 L700.96 287.56 L697.24 286.3 L693.46 285.13 L689.62 284.02 L685.73 282.99 L681.79 282.04 L677.81 281.17 L673.79 280.37 L669.73 279.65 L665.64 279.02 L661.53 278.46 L657.39 277.99 L653.24 277.59 L649.08 277.28 L644.91 277.06 L640.74 276.91 L636.58 276.85 L632.42 276.87 L628.27 276.98 L624.14 277.17 L620.03 277.44 L615.95 277.79 L611.9 278.23 L607.88 278.75 L603.91 279.35 L599.98 280.03 L596.1 280.79 L592.27 281.63 L588.51 282.55 L584.8 283.55 L581.16 284.62 L577.6 285.77 L574.11 286.99 L570.7 288.29 L567.37 289.66 L564.13 291.09 L560.98 292.6 L557.93 294.17 L554.98 295.81 L552.13 297.51 L549.39 299.27 L546.75 301.09 L544.23 302.96 L541.83 304.9 L539.55 306.88 L537.38 308.92 L535.35 311.01 L533.44 313.14 L531.66 315.31 L530.01 317.53 L528.5 319.79 L527.13 322.08 L525.89 324.4 L524.8 326.76 L523.84 329.14 L523.04 331.55 L522.37 333.99 L521.86 336.44 L521.49 338.9 L521.27 341.39 L521.2 343.88 L521.28 346.38 L521.5 348.88 L521.88 351.38 L522.41 353.89 L523.09 356.39 L523.91 358.88 L524.88 361.35 L526 363.82 L527.27 366.27 L528.68 368.7 L530.24 371.1 L531.93 373.48 L533.77 375.83 L535.74 378.14 L537.85 380.42 L540.1 382.66 L542.47 384.86 L544.97 387.02 L547.6 389.13 L550.35 391.19 L553.22 393.19 L556.2 395.14 L559.29 397.03 L562.5 398.87 L565.8 400.64 L569.21 402.34 L572.71 403.98 L576.3 405.55 L579.98 407.04 L583.74 408.46 L587.58 409.81 L591.49 411.08 L595.47 412.27 L599.5 413.37 L603.6 414.4 L607.75 415.34 L611.94 416.2 L616.18 416.97 L620.45 417.65 L624.75 418.25 L629.07 418.75 L633.41 419.17 L637.77 419.49 L642.13 419.73 L646.49 419.87 L650.85 419.93 L655.2 419.89 L659.54 419.76 L663.85 419.54 L668.14 419.23 L672.39 418.83 L676.61 418.34 L680.78 417.76 L684.9 417.09 L688.97 416.34 L692.98 415.5 L696.93 414.57 L700.81 413.56 L704.61 412.47 L708.34 411.3 L711.98 410.05 L715.53 408.72 L718.99 407.32 L722.35 405.84 L725.61 404.29 L728.76 402.68 L731.81 400.99 L734.74 399.24 L737.56 397.43 L740.26 395.56 L742.83 393.62 L745.28 391.64 L747.6 389.6 L749.79 387.51 L751.85 385.38 L753.76 383.2 L755.54 380.97 L757.19 378.71 L758.68 376.42 L760.04 374.09 L761.25 371.73 L762.31 369.34 L763.23 366.93 L764 364.5 L764.62 362.06 L765.09 359.59 L765.42 357.12 L765.59 354.63 L765.62 352.15 L765.5 349.65 L765.23 347.16 L764.81 344.67 L764.24 342.19 L763.53 339.72 L762.68 337.26 L761.68 334.82 L760.55 332.39Z" fill="none" stroke="#d8702c" stroke-opacity="0.8" stroke-width="6" stroke-dasharray="0.6 1.5" clip-path="url(#ringclip)"/>
<polygon points="757.69,330.22 756.29,327.87 754.76,325.54 753.1,323.25 751.31,320.99 749.39,318.76 747.35,316.57 745.18,314.42 742.9,312.3 740.49,310.24 737.98,308.22 735.35,306.25 732.62,304.33 729.78,302.46 726.85,300.65 723.81,298.89 720.69,297.19 717.47,295.56 714.17,293.98 710.79,292.48 707.33,291.03 703.79,289.66 700.19,288.35 696.52,287.12 692.79,285.96 689,284.87 685.16,283.85 681.28,282.91 677.35,282.05 673.38,281.26 669.38,280.56 665.34,279.93 661.28,279.38 657.21,278.91 653.11,278.52 649.01,278.22 644.89,277.99 640.78,277.85 636.67,277.79 632.57,277.81 628.47,277.92 624.4,278.1 620.35,278.37 616.32,278.72 612.32,279.15 608.36,279.67 604.44,280.26 600.57,280.93 596.74,281.68 592.97,282.51 589.25,283.42 585.59,284.4 582.01,285.46 578.49,286.6 575.05,287.8 571.68,289.08 568.4,290.43 565.21,291.85 562.1,293.33 559.09,294.88 556.18,296.5 553.37,298.17 550.67,299.91 548.07,301.71 545.58,303.56 543.21,305.47 540.96,307.43 538.83,309.44 536.82,311.49 534.94,313.6 533.18,315.74 531.56,317.93 530.07,320.16 528.72,322.42 527.5,324.71 526.42,327.03 525.49,329.39 524.69,331.76 524.04,334.16 523.53,336.58 523.17,339.01 522.95,341.46 522.88,343.92 522.96,346.38 523.19,348.85 523.56,351.32 524.08,353.79 524.75,356.25 525.57,358.71 526.53,361.15 527.63,363.58 528.88,366 530.28,368.39 531.81,370.76 533.48,373.11 535.3,375.42 537.24,377.7 539.33,379.95 541.54,382.16 543.88,384.33 546.35,386.46 548.94,388.54 551.65,390.56 554.48,392.54 557.42,394.47 560.47,396.33 563.63,398.14 566.89,399.88 570.25,401.56 573.7,403.18 577.25,404.72 580.87,406.19 584.58,407.6 588.36,408.92 592.22,410.17 596.14,411.34 600.12,412.44 604.16,413.45 608.25,414.38 612.39,415.22 616.56,415.98 620.77,416.65 625.01,417.24 629.27,417.74 633.55,418.15 637.85,418.47 642.15,418.7 646.45,418.84 650.75,418.9 655.04,418.86 659.31,418.73 663.56,418.52 667.79,418.21 671.98,417.82 676.14,417.33 680.26,416.76 684.32,416.1 688.34,415.36 692.29,414.53 696.18,413.62 700.01,412.63 703.76,411.55 707.43,410.4 711.02,409.16 714.52,407.86 717.93,406.47 721.25,405.02 724.46,403.49 727.57,401.9 730.58,400.23 733.47,398.51 736.25,396.72 738.91,394.88 741.45,392.97 743.87,391.01 746.15,389 748.31,386.94 750.34,384.84 752.23,382.69 753.99,380.5 755.61,378.27 757.09,376.01 758.43,373.71 759.62,371.38 760.67,369.03 761.58,366.66 762.34,364.26 762.95,361.85 763.42,359.42 763.74,356.98 763.92,354.53 763.94,352.07 763.82,349.61 763.56,347.16 763.15,344.7 762.59,342.26 761.89,339.82 761.05,337.39 760.07,334.98 758.95,332.59" fill="#c9622b" />
<polygon points="756.7,330.36 755.32,328.03 753.8,325.73 752.16,323.45 750.38,321.21 748.48,319 746.45,316.83 744.31,314.69 742.04,312.6 739.66,310.55 737.17,308.55 734.56,306.59 731.86,304.69 729.04,302.84 726.13,301.04 723.13,299.3 720.03,297.62 716.84,296 713.56,294.44 710.21,292.94 706.78,291.51 703.28,290.15 699.7,288.85 696.07,287.63 692.37,286.48 688.61,285.4 684.81,284.39 680.95,283.46 677.06,282.6 673.12,281.82 669.15,281.12 665.16,280.5 661.13,279.95 657.09,279.49 653.03,279.11 648.96,278.8 644.88,278.58 640.8,278.44 636.73,278.38 632.66,278.4 628.6,278.51 624.56,278.69 620.55,278.96 616.55,279.3 612.59,279.73 608.66,280.24 604.78,280.83 600.93,281.49 597.14,282.24 593.4,283.06 589.71,283.96 586.09,284.94 582.53,285.99 579.05,287.11 575.63,288.31 572.3,289.57 569.05,290.91 565.88,292.32 562.8,293.79 559.82,295.33 556.93,296.93 554.15,298.59 551.47,300.31 548.89,302.1 546.43,303.93 544.08,305.82 541.85,307.77 539.73,309.76 537.74,311.8 535.88,313.88 534.14,316.01 532.53,318.18 531.06,320.39 529.71,322.63 528.51,324.9 527.44,327.21 526.51,329.54 525.72,331.89 525.08,334.27 524.58,336.67 524.22,339.08 524.01,341.51 523.94,343.94 524.02,346.38 524.24,348.83 524.61,351.28 525.13,353.73 525.79,356.17 526.6,358.6 527.55,361.03 528.65,363.44 529.89,365.83 531.27,368.2 532.79,370.55 534.45,372.87 536.25,375.17 538.18,377.43 540.25,379.66 542.44,381.85 544.76,384 547.21,386.11 549.78,388.17 552.47,390.18 555.27,392.14 558.19,394.04 561.21,395.89 564.34,397.68 567.57,399.41 570.9,401.08 574.32,402.67 577.83,404.21 581.43,405.67 585.11,407.06 588.86,408.37 592.68,409.61 596.56,410.77 600.51,411.85 604.51,412.85 608.57,413.77 612.66,414.61 616.8,415.36 620.97,416.03 625.18,416.61 629.4,417.11 633.64,417.51 637.9,417.83 642.16,418.06 646.43,418.2 650.69,418.25 654.94,418.22 659.17,418.09 663.39,417.88 667.57,417.57 671.73,417.18 675.85,416.7 679.93,416.14 683.96,415.49 687.94,414.75 691.86,413.93 695.71,413.03 699.5,412.04 703.22,410.98 706.86,409.83 710.42,408.61 713.89,407.31 717.27,405.94 720.56,404.5 723.74,402.99 726.83,401.41 729.81,399.76 732.68,398.05 735.43,396.28 738.07,394.45 740.59,392.56 742.98,390.62 745.25,388.63 747.39,386.59 749.4,384.5 751.28,382.37 753.02,380.2 754.63,377.99 756.09,375.75 757.42,373.47 758.6,371.17 759.65,368.84 760.55,366.48 761.3,364.11 761.91,361.71 762.37,359.31 762.69,356.89 762.87,354.46 762.89,352.03 762.78,349.59 762.51,347.15 762.11,344.72 761.56,342.3 760.87,339.88 760.03,337.47 759.06,335.08 757.95,332.71" fill="url(#cupin)" />
<polygon points="756.7,330.36 755.32,328.03 753.8,325.73 752.16,323.45 750.38,321.21 748.48,319 746.45,316.83 744.31,314.69 742.04,312.6 739.66,310.55 737.17,308.55 734.56,306.59 731.86,304.69 729.04,302.84 726.13,301.04 723.13,299.3 720.03,297.62 716.84,296 713.56,294.44 710.21,292.94 706.78,291.51 703.28,290.15 699.7,288.85 696.07,287.63 692.37,286.48 688.61,285.4 684.81,284.39 680.95,283.46 677.06,282.6 673.12,281.82 669.15,281.12 665.16,280.5 661.13,279.95 657.09,279.49 653.03,279.11 648.96,278.8 644.88,278.58 640.8,278.44 636.73,278.38 632.66,278.4 628.6,278.51 624.56,278.69 620.55,278.96 616.55,279.3 612.59,279.73 608.66,280.24 604.78,280.83 600.93,281.49 597.14,282.24 593.4,283.06 589.71,283.96 586.09,284.94 582.53,285.99 579.05,287.11 575.63,288.31 572.3,289.57 569.05,290.91 565.88,292.32 562.8,293.79 559.82,295.33 556.93,296.93 554.15,298.59 551.47,300.31 548.89,302.1 546.43,303.93 544.08,305.82 541.85,307.77 539.73,309.76 537.74,311.8 535.88,313.88 534.14,316.01 532.53,318.18 531.06,320.39 529.71,322.63 528.51,324.9 527.44,327.21 526.51,329.54 525.72,331.89 525.08,334.27 524.58,336.67 524.22,339.08 524.01,341.51 523.94,343.94 524.02,346.38 524.24,348.83 524.61,351.28 525.13,353.73 525.79,356.17 526.6,358.6 527.55,361.03 528.65,363.44 529.89,365.83 531.27,368.2 532.79,370.55 534.45,372.87 536.25,375.17 538.18,377.43 540.25,379.66 542.44,381.85 544.76,384 547.21,386.11 549.78,388.17 552.47,390.18 555.27,392.14 558.19,394.04 561.21,395.89 564.34,397.68 567.57,399.41 570.9,401.08 574.32,402.67 577.83,404.21 581.43,405.67 585.11,407.06 588.86,408.37 592.68,409.61 596.56,410.77 600.51,411.85 604.51,412.85 608.57,413.77 612.66,414.61 616.8,415.36 620.97,416.03 625.18,416.61 629.4,417.11 633.64,417.51 637.9,417.83 642.16,418.06 646.43,418.2 650.69,418.25 654.94,418.22 659.17,418.09 663.39,417.88 667.57,417.57 671.73,417.18 675.85,416.7 679.93,416.14 683.96,415.49 687.94,414.75 691.86,413.93 695.71,413.03 699.5,412.04 703.22,410.98 706.86,409.83 710.42,408.61 713.89,407.31 717.27,405.94 720.56,404.5 723.74,402.99 726.83,401.41 729.81,399.76 732.68,398.05 735.43,396.28 738.07,394.45 740.59,392.56 742.98,390.62 745.25,388.63 747.39,386.59 749.4,384.5 751.28,382.37 753.02,380.2 754.63,377.99 756.09,375.75 757.42,373.47 758.6,371.17 759.65,368.84 760.55,366.48 761.3,364.11 761.91,361.71 762.37,359.31 762.69,356.89 762.87,354.46 762.89,352.03 762.78,349.59 762.51,347.15 762.11,344.72 761.56,342.3 760.87,339.88 760.03,337.47 759.06,335.08 757.95,332.71" fill="url(#dith)" />
<clipPath id="cupclip"><polygon points="756.7,330.36 755.32,328.03 753.8,325.73 752.16,323.45 750.38,321.21 748.48,319 746.45,316.83 744.31,314.69 742.04,312.6 739.66,310.55 737.17,308.55 734.56,306.59 731.86,304.69 729.04,302.84 726.13,301.04 723.13,299.3 720.03,297.62 716.84,296 713.56,294.44 710.21,292.94 706.78,291.51 703.28,290.15 699.7,288.85 696.07,287.63 692.37,286.48 688.61,285.4 684.81,284.39 680.95,283.46 677.06,282.6 673.12,281.82 669.15,281.12 665.16,280.5 661.13,279.95 657.09,279.49 653.03,279.11 648.96,278.8 644.88,278.58 640.8,278.44 636.73,278.38 632.66,278.4 628.6,278.51 624.56,278.69 620.55,278.96 616.55,279.3 612.59,279.73 608.66,280.24 604.78,280.83 600.93,281.49 597.14,282.24 593.4,283.06 589.71,283.96 586.09,284.94 582.53,285.99 579.05,287.11 575.63,288.31 572.3,289.57 569.05,290.91 565.88,292.32 562.8,293.79 559.82,295.33 556.93,296.93 554.15,298.59 551.47,300.31 548.89,302.1 546.43,303.93 544.08,305.82 541.85,307.77 539.73,309.76 537.74,311.8 535.88,313.88 534.14,316.01 532.53,318.18 531.06,320.39 529.71,322.63 528.51,324.9 527.44,327.21 526.51,329.54 525.72,331.89 525.08,334.27 524.58,336.67 524.22,339.08 524.01,341.51 523.94,343.94 524.02,346.38 524.24,348.83 524.61,351.28 525.13,353.73 525.79,356.17 526.6,358.6 527.55,361.03 528.65,363.44 529.89,365.83 531.27,368.2 532.79,370.55 534.45,372.87 536.25,375.17 538.18,377.43 540.25,379.66 542.44,381.85 544.76,384 547.21,386.11 549.78,388.17 552.47,390.18 555.27,392.14 558.19,394.04 561.21,395.89 564.34,397.68 567.57,399.41 570.9,401.08 574.32,402.67 577.83,404.21 581.43,405.67 585.11,407.06 588.86,408.37 592.68,409.61 596.56,410.77 600.51,411.85 604.51,412.85 608.57,413.77 612.66,414.61 616.8,415.36 620.97,416.03 625.18,416.61 629.4,417.11 633.64,417.51 637.9,417.83 642.16,418.06 646.43,418.2 650.69,418.25 654.94,418.22 659.17,418.09 663.39,417.88 667.57,417.57 671.73,417.18 675.85,416.7 679.93,416.14 683.96,415.49 687.94,414.75 691.86,413.93 695.71,413.03 699.5,412.04 703.22,410.98 706.86,409.83 710.42,408.61 713.89,407.31 717.27,405.94 720.56,404.5 723.74,402.99 726.83,401.41 729.81,399.76 732.68,398.05 735.43,396.28 738.07,394.45 740.59,392.56 742.98,390.62 745.25,388.63 747.39,386.59 749.4,384.5 751.28,382.37 753.02,380.2 754.63,377.99 756.09,375.75 757.42,373.47 758.6,371.17 759.65,368.84 760.55,366.48 761.3,364.11 761.91,361.71 762.37,359.31 762.69,356.89 762.87,354.46 762.89,352.03 762.78,349.59 762.51,347.15 762.11,344.72 761.56,342.3 760.87,339.88 760.03,337.47 759.06,335.08 757.95,332.71"/></clipPath>
<g clip-path="url(#cupclip)">
<polygon points="750,423.21 748.63,420.84 747.13,418.48 745.5,416.16 743.74,413.87 741.86,411.62 739.85,409.4 737.72,407.22 735.48,405.09 733.12,403 730.65,400.95 728.07,398.96 725.38,397.02 722.6,395.13 719.71,393.3 716.73,391.53 713.65,389.81 710.49,388.16 707.24,386.57 703.92,385.05 700.51,383.59 697.04,382.21 693.49,380.89 689.88,379.65 686.21,378.47 682.49,377.38 678.71,376.36 674.89,375.41 671.02,374.54 667.11,373.75 663.17,373.05 659.2,372.42 655.21,371.87 651.2,371.4 647.17,371.02 643.13,370.71 639.08,370.5 635.03,370.36 630.98,370.31 626.94,370.34 622.91,370.45 618.9,370.65 614.91,370.93 610.95,371.29 607.01,371.74 603.11,372.26 599.25,372.87 595.43,373.56 591.67,374.33 587.95,375.18 584.29,376.11 580.69,377.11 577.16,378.19 573.69,379.35 570.3,380.58 566.99,381.88 563.76,383.25 560.61,384.7 557.55,386.21 554.59,387.79 551.72,389.43 548.95,391.14 546.29,392.9 543.73,394.73 541.28,396.61 538.94,398.55 536.72,400.54 534.62,402.58 532.64,404.67 530.79,406.81 529.06,408.99 527.46,411.21 525.99,413.46 524.65,415.76 523.45,418.09 522.39,420.44 521.46,422.83 520.68,425.24 520.03,427.67 519.53,430.12 519.17,432.59 518.96,435.07 518.89,437.56 518.96,440.05 519.18,442.56 519.54,445.06 520.05,447.56 520.71,450.05 521.51,452.54 522.45,455.01 523.53,457.47 524.76,459.92 526.13,462.34 527.63,464.74 529.28,467.11 531.06,469.45 532.97,471.76 535.02,474.03 537.19,476.27 539.49,478.46 541.92,480.61 544.46,482.71 547.13,484.76 549.91,486.76 552.8,488.7 555.8,490.58 558.9,492.4 562.11,494.17 565.41,495.86 568.81,497.49 572.29,499.05 575.85,500.53 579.5,501.94 583.22,503.28 587.01,504.54 590.87,505.72 594.78,506.81 598.75,507.83 602.78,508.76 606.84,509.61 610.95,510.37 615.09,511.04 619.26,511.63 623.45,512.13 627.66,512.53 631.88,512.85 636.12,513.08 640.35,513.21 644.58,513.26 648.79,513.21 653,513.08 657.18,512.85 661.34,512.53 665.47,512.12 669.56,511.62 673.61,511.04 677.61,510.37 681.56,509.6 685.45,508.76 689.28,507.83 693.05,506.81 696.74,505.72 700.35,504.54 703.89,503.29 707.34,501.95 710.69,500.55 713.96,499.07 717.13,497.51 720.19,495.89 723.15,494.2 726,492.45 728.74,490.64 731.36,488.76 733.87,486.83 736.25,484.84 738.51,482.8 740.64,480.71 742.64,478.57 744.5,476.39 746.24,474.17 747.84,471.91 749.3,469.61 750.62,467.28 751.8,464.93 752.84,462.54 753.74,460.13 754.49,457.7 755.1,455.25 755.57,452.79 755.89,450.32 756.07,447.84 756.1,445.35 755.99,442.86 755.73,440.37 755.33,437.89 754.79,435.41 754.11,432.94 753.29,430.48 752.33,428.04 751.23,425.62" fill="#d8923a" />
<polygon points="749.02,423.36 747.67,421 746.18,418.67 744.57,416.37 742.83,414.1 740.96,411.86 738.97,409.67 736.86,407.51 734.64,405.39 732.3,403.32 729.85,401.29 727.29,399.32 724.63,397.39 721.87,395.52 719,393.7 716.05,391.94 713,390.24 709.87,388.61 706.65,387.03 703.35,385.52 699.97,384.08 696.53,382.7 693.01,381.4 689.44,380.16 685.8,379 682.1,377.91 678.36,376.9 674.57,375.96 670.73,375.1 666.86,374.32 662.96,373.62 659.02,372.99 655.06,372.45 651.08,371.99 647.09,371.61 643.08,371.31 639.07,371.09 635.05,370.96 631.04,370.9 627.03,370.93 623.04,371.05 619.06,371.24 615.11,371.52 611.17,371.88 607.27,372.32 603.41,372.84 599.58,373.45 595.79,374.13 592.06,374.89 588.37,375.74 584.75,376.66 581.18,377.65 577.67,378.72 574.24,379.87 570.88,381.09 567.59,382.38 564.39,383.74 561.27,385.17 558.24,386.67 555.3,388.24 552.46,389.87 549.71,391.56 547.07,393.31 544.54,395.12 542.11,396.99 539.79,398.91 537.59,400.88 535.51,402.91 533.55,404.98 531.71,407.1 530,409.26 528.41,411.46 526.96,413.7 525.63,415.97 524.44,418.28 523.39,420.61 522.47,422.98 521.7,425.37 521.06,427.78 520.56,430.21 520.2,432.65 519.99,435.11 519.92,437.58 520,440.06 520.21,442.54 520.58,445.02 521.08,447.49 521.73,449.97 522.52,452.43 523.46,454.88 524.53,457.32 525.75,459.74 527.11,462.14 528.6,464.52 530.23,466.87 532,469.19 533.89,471.48 535.92,473.73 538.08,475.95 540.36,478.12 542.76,480.25 545.29,482.33 547.93,484.36 550.69,486.34 553.55,488.27 556.53,490.14 559.6,491.94 562.78,493.69 566.05,495.37 569.42,496.98 572.87,498.52 576.4,499.99 580.02,501.39 583.7,502.72 587.46,503.96 591.28,505.13 595.16,506.22 599.1,507.23 603.09,508.15 607.12,508.99 611.19,509.75 615.29,510.41 619.42,510.99 623.58,511.49 627.75,511.89 631.94,512.2 636.13,512.43 640.32,512.56 644.51,512.61 648.7,512.56 652.86,512.43 657.01,512.2 661.13,511.89 665.22,511.48 669.27,510.99 673.29,510.41 677.25,509.74 681.17,508.99 685.03,508.15 688.82,507.23 692.55,506.22 696.21,505.14 699.8,503.97 703.3,502.73 706.72,501.41 710.05,500.01 713.28,498.54 716.42,497.01 719.46,495.4 722.4,493.73 725.22,491.99 727.94,490.19 730.54,488.33 733.02,486.42 735.38,484.45 737.62,482.43 739.73,480.35 741.71,478.24 743.56,476.07 745.28,473.87 746.87,471.63 748.32,469.36 749.63,467.05 750.8,464.71 751.83,462.35 752.72,459.96 753.47,457.55 754.08,455.12 754.54,452.68 754.86,450.23 755.03,447.77 755.07,445.31 754.96,442.84 754.71,440.37 754.31,437.91 753.78,435.45 753.1,433 752.29,430.56 751.34,428.14 750.25,425.74" fill="url(#chk)" />
</g>
<polygon points="262.88,810.64 235.46,736.71 231.14,738.29 258.55,812.21" fill="#00c800" />
<polygon points="262.88,810.64 235.46,736.71 233.58,737.4 261,811.32" fill="#00a800" />
<polygon points="237.76,735.87 229.2,725 228.84,739.13" fill="#00c800" />
<polygon points="261.1,813.69 372.89,793.87 372.11,789.33 260.32,809.16" fill="#d40000" />
<polygon points="261.1,813.69 372.89,793.87 372.55,791.9 260.77,811.72" fill="#b00000" />
<polygon points="373.26,796.03 393.5,788.6 371.74,787.17" fill="#d40000" />
<polygon points="261,768.6 266,770.2 334.5,811 330.5,815 326,812.8" fill="#3c9b70" />
<path d="M331 812.3 L812.5 729.6" fill="none" stroke="#3b9b6f" stroke-width="5.0" stroke-linejoin="round" />
<path d="M332.5 811.3 L814 728.6" fill="none" stroke="#4cbf8a" stroke-width="2.6" stroke-linejoin="round" />
<polygon points="811.5,726.6 816.8,728.6 812.5,732.4" fill="#43ad7c" />
<polygon points="263.01,811.4 261.8,725.47 257.2,725.53 258.41,811.45" fill="#0000b4" />
<polygon points="263.01,811.4 261.8,725.47 259.8,725.5 261.01,811.42" fill="#00009a" />
<polygon points="265.3,725.43 259.4,706.5 253.7,725.57" fill="#0000b4" />
<path d="M480 128h3v8h8v3h-8v8h-3v-8h-8v-3h8z" fill="#000"/>
<path d="M481 129h1v8h8v1h-8v8h-1v-8h-8v-1h8z" fill="#fff"/>
</svg></body></html>
